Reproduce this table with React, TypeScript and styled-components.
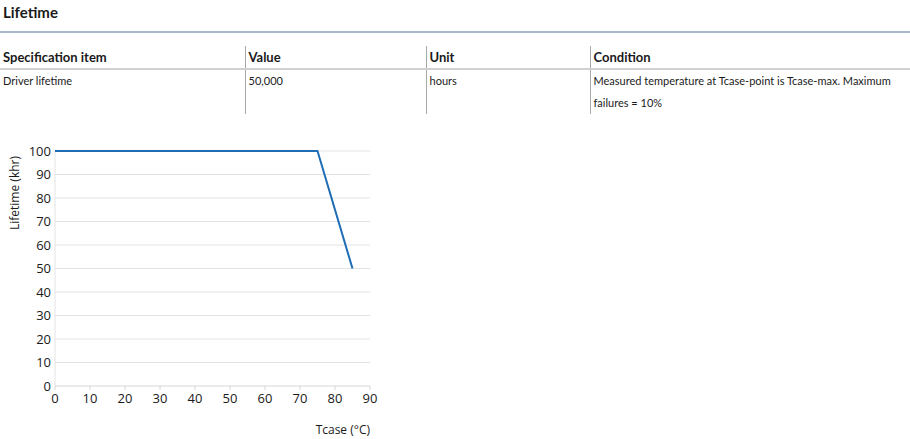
import React from 'react'
import styled, { createGlobalStyle } from 'styled-components'

const GlobalStyle = createGlobalStyle`
  html, body {
    margin: 0;
    padding: 0;
    background: #ffffff;
    color: #1a1a1a;
    font-family: Lato, "Liberation Sans", sans-serif;
  }
`

type Spec = {
  item: string;
  value: string;
  unit: string;
  condition: string;
}

const specs: Spec[] = [
  {
    item: 'Driver lifetime',
    value: '50,000',
    unit: 'hours',
    condition: 'Measured temperature at Tcase-point is Tcase-max. Maximum failures = 10%',
  },
]

const columns = ['Specification item', 'Value', 'Unit', 'Condition']
const colWidths = [245, 181, 164, 320]

// chart geometry
const X0 = 55
const XSTEP = 3.5 // px per °C
const Y0 = 246 // y of 0 khr inside svg
const YSTEP = 2.35 // px per khr
const px = (t: number) => X0 + t * XSTEP
const py = (v: number) => Y0 - v * YSTEP
const curve: [number, number][] = [[0, 100], [75, 100], [85, 50]]

export default function App(): React.ReactElement {
  return (
    <Page>
      <GlobalStyle />
      <Title>Lifetime</Title>
      <SpecTable>
        <colgroup>
          {colWidths.map((w, i) => <col key={i} style={{ width: w }} />)}
        </colgroup>
        <thead>
          <tr>
            {columns.map((c) => <HeadCell key={c}>{c}</HeadCell>)}
          </tr>
        </thead>
        <tbody>
          {specs.map((s) => (
            <tr key={s.item}>
              <BodyCell>{s.item}</BodyCell>
              <BodyCell>{s.value}</BodyCell>
              <BodyCell>{s.unit}</BodyCell>
              <BodyCell>{s.condition}</BodyCell>
            </tr>
          ))}
        </tbody>
      </SpecTable>
      <Chart width={390} height={299} viewBox="0 0 390 299">
        {[10, 20, 30, 40, 50, 60, 70, 80, 90, 100].map((v) => (
          <line key={v} x1={X0} x2={px(90)} y1={py(v)} y2={py(v)} stroke="#e3e3e3" strokeWidth={1} />
        ))}
        <line x1={X0} x2={X0} y1={py(100)} y2={Y0} stroke="#e3e3e3" strokeWidth={1} />
        <line x1={X0} x2={px(90)} y1={Y0} y2={Y0} stroke="#d6d6d6" strokeWidth={1} />
        {[0, 10, 20, 30, 40, 50, 60, 70, 80, 90].map((t) => (
          <g key={t}>
            <line x1={px(t)} x2={px(t)} y1={Y0} y2={Y0 + 4} stroke="#d6d6d6" strokeWidth={1} />
            <AxisText x={px(t)} y={Y0 + 17} textAnchor="middle">{t}</AxisText>
          </g>
        ))}
        {[0, 10, 20, 30, 40, 50, 60, 70, 80, 90, 100].map((v) => (
          <AxisText key={v} x={51} y={py(v) + 4.5} textAnchor="end">{v}</AxisText>
        ))}
        <AxisText x={19} y={53} textAnchor="middle" transform="rotate(-90 19 53)" $small>
          Lifetime (khr)
        </AxisText>
        <AxisText x={370} y={294} textAnchor="end" $small>Tcase (°C)</AxisText>
        <polyline
          points={curve.map(([t, v]) => `${px(t)},${py(v)}`).join(' ')}
          fill="none"
          stroke="#1f6db4"
          strokeWidth={2}
        />
      </Chart>
    </Page>
  )
}

const Page = styled.div`
  width: 910px;
`
const Title = styled.h2`
  margin: 0;
  padding: 2px 3px 0;
  height: 33px;
  box-sizing: border-box;
  font-size: 15px;
  font-weight: 700;
  line-height: 20px;
  border-bottom: 2px solid #a9b7cb;
`
const SpecTable = styled.table`
  margin-top: 13px;
  width: 910px;
  border-collapse: collapse;
  table-layout: fixed;
`
const HeadCell = styled.th`
  text-align: left;
  font-size: 13px;
  font-weight: 700;
  height: 21px;
  padding: 0 3px 1px;
  border-bottom: 2px solid #d0d0d0;
  vertical-align: middle;
  & + & {
    border-left: 1px solid #a8a8a8;
  }
`
const BodyCell = styled.td`
  font-size: 11px;
  line-height: 22px;
  padding: 0 3px;
  vertical-align: top;
  & + & {
    border-left: 1px solid #a8a8a8;
  }
`
const Chart = styled.svg`
  display: block;
  margin-top: 26px;
`
const AxisText = styled.text<{ $small?: boolean }>`
  font-family: "Open Sans", "Noto Sans", sans-serif;
  font-size: ${({ $small }) => ($small ? '12px' : '13px')};
  fill: #1a1a1a;
`
